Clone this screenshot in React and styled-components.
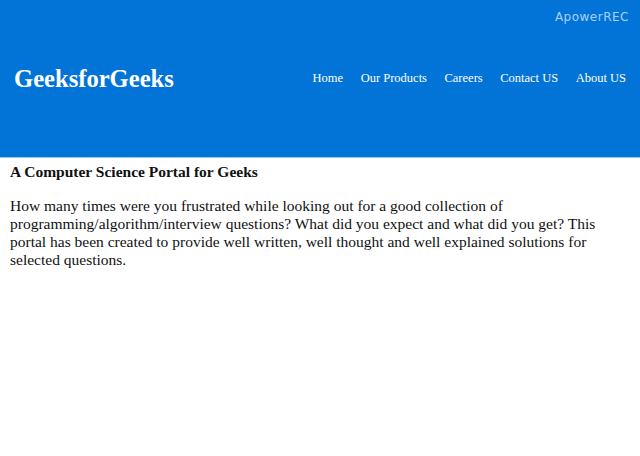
import styled, { createGlobalStyle } from "styled-components";

const GlobalStyle = createGlobalStyle`
  html, body {
    margin: 0;
    padding: 0;
    background: #fff;
  }
  body {
    font-family: "Liberation Serif", "Times New Roman", serif;
    color: #111;
  }
`

const Page = styled.div`
  position: relative;
  width: 640px;
  min-height: 456px;
  overflow: hidden;
`

const Header = styled.header`
  display: flex;
  align-items: center;
  justify-content: space-between;
  height: 157px;
  padding: 0 14px;
  background-color: #0274d7;
  border-bottom: 1px solid #8ec9f2;
`

const Logo = styled.h1`
  margin: 0;
  font-size: 24.6px;
  font-weight: bold;
  color: #fff;
`

const Nav = styled.ul`
  display: flex;
  gap: 17.5px;
  margin: 0;
  padding: 0;
  list-style: none;
`

const NavItem = styled.li`
  font-size: 12.5px;
  color: #fff;
  cursor: pointer;
`

const Watermark = styled.span`
  position: absolute;
  top: 10px;
  right: 11px;
  font-family: "DejaVu Sans", sans-serif;
  font-size: 12px;
  color: #a9d2f5;
  letter-spacing: 0.5px;
`

const Content = styled.main`
  padding: 4px 10px 0;
`

const Titulo = styled.h3`
  margin: 0;
  font-size: 15.5px;
  font-weight: bold;
  line-height: 19px;
`

const Texto = styled.p`
  margin: 16px 0 0;
  font-size: 15.5px;
  line-height: 18px;
`

const links = ["Home", "Our Products", "Careers", "Contact US", "About US"]

function App() {
  return (
    <>
      <GlobalStyle />
      <Page>
        <Header>
          <Logo>GeeksforGeeks</Logo>
          <Nav>
            {links.map(l => (
              <NavItem key={l}>{l}</NavItem>
            ))}
          </Nav>
        </Header>
        <Watermark>ApowerREC</Watermark>
        <Content>
          <Titulo>A Computer Science Portal for Geeks</Titulo>
          <Texto>
            How many times were you frustrated while looking out for a good
            collection of programming/algorithm/interview questions? What did
            you expect and what did you get? This portal has been created to
            provide well written, well thought and well explained solutions
            for selected questions.
          </Texto>
        </Content>
      </Page>
    </>
  )
}

export default App
